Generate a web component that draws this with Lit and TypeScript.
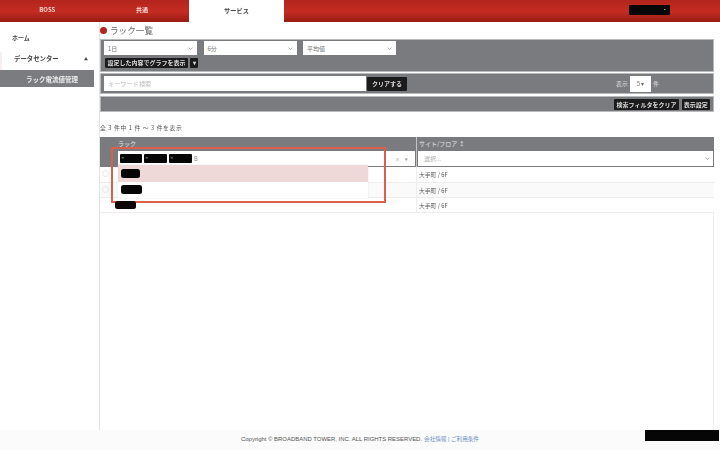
import { LitElement, html, css } from "lit";
import { customElement } from "lit/decorators.js";

const down = html`<svg class="chev" viewBox="0 0 6 4" width="5" height="3"><path d="M0.5 0.8L3 3.2L5.5 0.8" fill="none" stroke="#888" stroke-width="0.9"/></svg>`;

@customElement("app-root")
export class AppRoot extends LitElement {
  static styles = css`
    :host {
      display: block;
      width: 720px;
      height: 450px;
      overflow: hidden;
      background: #fff;
      font-family: "Noto Sans CJK JP", "Liberation Sans", sans-serif;
      color: #444;
      font-size: 6px;
    }
    .page { height: 450px; display: flex; flex-direction: column; filter: blur(0.7px); }
    header {
      height: 21px; flex: none; display: flex; align-items: stretch;
      background: linear-gradient(#b3241c 0%, #c42c22 55%, #9c1c14 100%);
      border-bottom: 1px solid #9c1c14;
      box-sizing: content-box;
    }
    .tab {
      width: 94.6px; display: flex; align-items: center; justify-content: center;
      color: #f3d8d4; font-size: 6px; font-weight: 700; padding-bottom: 2px; box-sizing: border-box;
    }
    .tab.on { background: #fff; color: #444; height: 22px; font-size: 6.2px; }
    .user {
      margin: 5px 0 0 345px; width: 41px; height: 10px; background: #070707; border-radius: 1px;
      display: flex; justify-content: flex-end; align-items: center; padding-right: 3px; box-sizing: border-box;
      color: #ccc; font-size: 4px;
    }
    .body { flex: 1; display: flex; min-height: 0; }
    aside { width: 99px; flex: none; border-right: 1px solid #e4e4e4; box-sizing: content-box; padding-top: 9px; }
    .nav { font-weight: 700; color: #444; padding-left: 12px; height: 14px; line-height: 14px; }
    .nav.dc { margin-top: 7px; padding: 0 11px 0 14px; display: flex; justify-content: space-between; align-items: flex-start; height: 18px; box-shadow: inset 2px 0 0 #fbeeee; font-size: 6.4px; }
    .nav.dc i { font-style: normal; font-size: 4px; }
    .nav.sel {
      background: #7a7c7f; color: #eee; width: 94px; height: 17px; padding-left: 26px; box-sizing: border-box;
      font-weight: 700; line-height: 16px; font-size: 6.5px;
    }
    main { flex: 1; padding: 1px 6px 0 0; min-width: 0; display: flex; flex-direction: column; }
    h1 {
      margin: 0; height: 14px; padding-bottom: 2px; box-sizing: content-box; display: flex; align-items: center; gap: 3px;
      font-size: 8.6px; font-weight: 400; color: #666; line-height: 14px;
    }
    h1 b { width: 7px; height: 7px; border-radius: 50%; background: #b3231f; }
    .band { background: #797b7e; border: 1px solid #b9babb; box-sizing: border-box; }
    .f1 { height: 33px; padding: 1px 3px; margin-bottom: 1px; }
    .sels { display: flex; gap: 6.5px; }
    .sel {
      width: 93px; height: 14px; background: #fff; display: flex; align-items: center; justify-content: space-between;
      padding: 0 4px; box-sizing: border-box; color: #777; font-size: 6px;
    }
    .btns { display: flex; gap: 2px; margin: 3px 0 0 1px; }
    .btn {
      background: #1b1b1b; color: #ddd; font-size: 6px; font-weight: 700; height: 10px; line-height: 10px;
      padding: 0 2.5px; white-space: nowrap; border-radius: 1px;
    }
    .f2 { height: 21px; margin-bottom: 2px; display: flex; align-items: center; padding: 0 3px; }
    .kw {
      width: 262px; height: 15px; background: #fff; color: #bbb; font-size: 6.2px; line-height: 15px; padding-left: 4px; box-sizing: border-box;
    }
    .clear { width: 40px; height: 14px; line-height: 14px; padding: 0; text-align: center; margin-left: 1px; }
    .show { margin-left: auto; margin-right: 51px; display: flex; align-items: center; gap: 2px; color: #ddd; font-size: 6px; }
    .num { width: 21px; height: 16px; background: #fff; color: #666; display: flex; align-items: center; justify-content: center; gap: 1px; }
    .f3 { height: 16px; display: flex; justify-content: flex-end; align-items: center; gap: 3px; padding-right: 3px; }
    .f3 .btn { height: 11px; line-height: 11px; padding: 0 2.2px; }
    .count { margin: 10px 0 0 0; height: 12px; line-height: 12px; font-size: 5.8px; color: #555; letter-spacing: 0.6px; }
    .table-wrap { position: relative; width: 614px; margin-top: 3px; }
    .thead { display: grid; grid-template-columns: 14px 302px 298px; background: #797b7e; height: 30px; }
    .hcell { padding: 0 1px 0 1px; display: flex; flex-direction: column; min-width: 0; }
    .hcell + .hcell { border-left: 1px solid #c2c3c4; }
    .label { height: 14px; line-height: 14px; color: #e4e4e4; font-size: 6px; padding-left: 1px; white-space: nowrap; }
    .hcell.first .label { padding-left: 3px; }
    .input {
      height: 15px; background: #fff; display: flex; align-items: center; gap: 2px; padding: 0 3px 0 2px; color: #888; font-size: 5.5px;
    }
    .input.multi { margin-left: 3px; }
    .input.single { padding-left: 6px; justify-content: space-between; color: #aaa; font-size: 6px; }
    .chip { height: 9.5px; background: #060606; border-radius: 1px; color: #ddd; font-size: 3.5px; line-height: 8px; padding-left: 1px; box-sizing: border-box; }
    .rt { margin-left: auto; display: flex; gap: 5px; color: #888; font-size: 5px; align-items: center; padding-right: 4px; }
    .row { display: grid; grid-template-columns: 14px 302px 298px; height: 15px; border-bottom: 1px solid #ededed; box-sizing: border-box; }
    .row.alt { background: #fafafa; }
    .row .site { border-left: 1px solid #eee; padding-left: 2px; line-height: 15px; color: #555; font-size: 5.8px; white-space: nowrap; }
    .row.first { height: 16px; }
    .ck { width: 7px; height: 7px; border: 1px solid #e4e4e4; border-radius: 50%; margin: 3px 0 0 2px; box-sizing: border-box; }
    .tail { flex: 1; border-right: 1px solid #eee; }
    .drop {
      position: absolute; left: 18px; top: 28px; width: 250px; background: #fff; box-shadow: 0 0 1px #ccc; z-index: 2;
    }
    .opt { height: 16.5px; display: flex; align-items: center; padding-left: 3px; }
    .opt.hot { background: #efd9d8; }
    .opt u { display: block; width: 19px; height: 9px; background: #060606; border-radius: 2.5px; }
    .opt + .opt u { width: 21px; }
    .frame { position: absolute; left: 11px; top: 10px; width: 275px; height: 56px; border: 2px solid #dc5f4c; box-sizing: border-box; z-index: 3; }
    .under { position: absolute; left: 15px; top: 64px; width: 21px; height: 8px; background: #0c0504; border-radius: 2.5px; z-index: 4; }
    footer {
      height: 20px; flex: none; background: #fbfbfb; display: flex; justify-content: center; align-items: center;
      font-family: "Liberation Sans", "Noto Sans CJK JP", sans-serif; font-size: 5.95px; color: #555; position: relative; padding-bottom: 2px; box-sizing: border-box;
    }
    footer a { color: #6a8fc0; margin-left: 2px; font-size: 5.6px; }
    .redact { position: absolute; right: 1px; top: 0; width: 74px; height: 11px; background: #060606; }
  `;

  render() {
    return html`<div class="page">
      <header>
        <div class="tab">BOSS</div>
        <div class="tab">共通</div>
        <div class="tab on">サービス</div>
        <div class="user">▪</div>
      </header>
      <div class="body">
        <aside>
          <div class="nav">ホーム</div>
          <div class="nav dc"><span>データセンター</span><i>▲</i></div>
          <div class="nav sel">ラック電流値管理</div>
        </aside>
        <main>
          <h1><b></b>ラック一覧</h1>
          <div class="band f1">
            <div class="sels">
              <div class="sel">1日 ${down}</div>
              <div class="sel">6分 ${down}</div>
              <div class="sel">平均値 ${down}</div>
            </div>
            <div class="btns"><span class="btn">設定した内容でグラフを表示</span><span class="btn">▾</span></div>
          </div>
          <div class="band f2">
            <div class="kw">キーワード検索</div>
            <span class="btn clear">クリアする</span>
            <div class="show">表示 <span class="num">5 ▾</span> 件</div>
          </div>
          <div class="band f3">
            <span class="btn">検索フィルタをクリア</span><span class="btn">表示設定</span>
          </div>
          <div class="count">全 3 件中 1 件 〜 3 件を表示</div>
          <div class="table-wrap">
            <div class="thead">
              <div></div>
              <div class="hcell first">
                <div class="label">ラック</div>
                <div class="input multi">
                  <span class="chip" style="width:22px">×</span>
                  <span class="chip" style="width:23px">×</span>
                  <span class="chip" style="width:23px">×</span>
                  <span>B</span>
                  <span class="rt"><span>×</span><span>▾</span></span>
                </div>
              </div>
              <div class="hcell">
                <div class="label">サイト/フロア ↕</div>
                <div class="input single"><span>選択...</span>${down}</div>
              </div>
            </div>
            <div class="row first"><div><div class="ck"></div></div><div></div><div class="site">大手町 / 6F</div></div>
            <div class="row alt"><div><div class="ck"></div></div><div></div><div class="site">大手町 / 6F</div></div>
            <div class="row"><div></div><div></div><div class="site">大手町 / 6F</div></div>
            <div class="drop">
              <div class="opt hot"><u></u></div>
              <div class="opt"><u></u></div>
            </div>
            <div class="frame"></div>
            <div class="under"></div>
          </div>
          <div class="tail"></div>
        </main>
      </div>
      <footer>
        <span>Copyright © BROADBAND TOWER, INC. ALL RIGHTS RESERVED.</span>
        <a>会社情報 | ご利用条件</a>
        <div class="redact"></div>
      </footer>
    </div>`;
  }
}
